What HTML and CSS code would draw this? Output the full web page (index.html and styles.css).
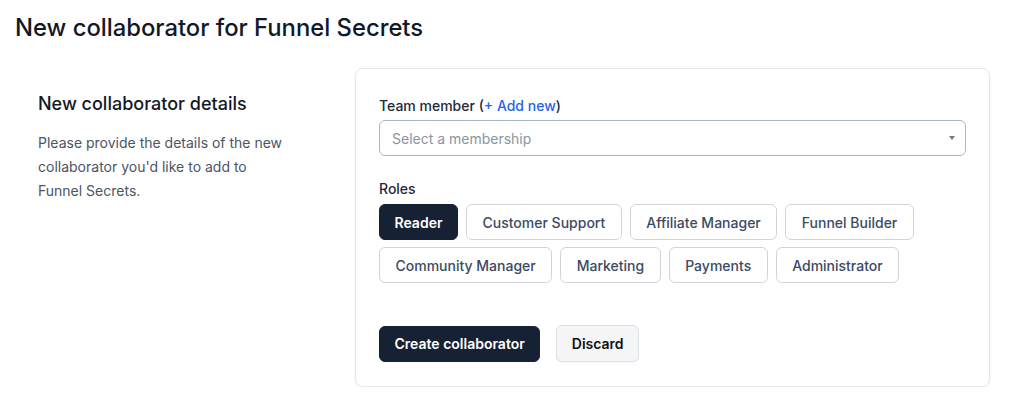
FILE: index.html
```html
<!DOCTYPE html>
<html lang="en">
<head>
<meta charset="utf-8">
<title>New collaborator for Funnel Secrets</title>
<link rel="stylesheet" href="styles.css">
</head>
<body>
  <h1 class="page-title">New collaborator for Funnel Secrets</h1>
  <div class="main">
    <div class="intro">
      <h2 class="intro-title">New collaborator details</h2>
      <p class="intro-text">Please provide the details of the new collaborator you'd like to add to Funnel Secrets.</p>
    </div>
    <div class="card">
      <label class="field-label">Team member (<a class="add-link" href="#">+ Add new</a>)</label>
      <div class="select">
        <span class="placeholder">Select a membership</span>
        <span class="caret"></span>
      </div>
      <div class="field-label roles-label">Roles</div>
      <div class="roles">
        <button class="role role-active">Reader</button>
        <button class="role">Customer Support</button>
        <button class="role">Affiliate Manager</button>
        <button class="role">Funnel Builder</button>
        <button class="role">Community Manager</button>
        <button class="role">Marketing</button>
        <button class="role">Payments</button>
        <button class="role">Administrator</button>
      </div>
      <div class="actions">
        <button class="btn btn-primary">Create collaborator</button>
        <button class="btn btn-secondary">Discard</button>
      </div>
    </div>
  </div>
</body>
</html>
```

FILE: styles.css
```css
* { box-sizing: border-box; }

body {
  margin: 0;
  font-family: Inter, "Noto Sans", "Liberation Sans", sans-serif;
  color: #111827;
  background: #ffffff;
}

.page-title {
  margin: 0;
  padding: 13px 0 0 15px;
  font-size: 23.8px;
  line-height: 30px;
  font-weight: 500;
  color: #111827;
}

.main {
  display: flex;
  margin-top: 25px;
  padding: 0 33px 0 38px;
}

.intro {
  width: 317px;
  flex-shrink: 0;
  padding-top: 24px;
}

.intro-title {
  margin: 0;
  font-size: 18px;
  line-height: 24px;
  font-weight: 500;
  color: #111827;
}

.intro-text {
  margin: 15px 0 0;
  max-width: 248px;
  font-size: 14px;
  line-height: 24px;
  color: #4b5563;
}

.card {
  flex: 1;
  border: 1px solid #e5e7eb;
  border-radius: 8px;
  box-shadow: 0 1px 3px rgba(0, 0, 0, 0.06);
  padding: 27px 23px 24px 23px;
}

.field-label {
  display: block;
  font-size: 14px;
  line-height: 20px;
  font-weight: 500;
  color: #1f2937;
}

.add-link {
  color: #2563eb;
  text-decoration: none;
}

.select {
  margin-top: 4px;
  height: 36px;
  border: 1px solid #aab6c4;
  border-radius: 6px;
  display: flex;
  align-items: center;
  justify-content: space-between;
  padding: 0 10px 0 12px;
}

.placeholder {
  font-size: 14px;
  color: #8b95a3;
}

.caret {
  width: 0;
  height: 0;
  border-left: 3.5px solid transparent;
  border-right: 3.5px solid transparent;
  border-top: 4px solid #7a7a7a;
}

.roles-label {
  margin-top: 23px;
}

.roles {
  margin-top: 5px;
  display: flex;
  flex-wrap: wrap;
  gap: 7px 8px;
}

.role {
  height: 36px;
  padding: 0 15.5px;
  border: 1px solid #d1d5db;
  border-radius: 6px;
  background: #ffffff;
  font-family: inherit;
  font-size: 14px;
  font-weight: 500;
  color: #3b4a63;
}

.role-active {
  padding: 0 14.5px;
  background: #172134;
  border-color: #172134;
  color: #ffffff;
  font-weight: 600;
}

.actions {
  margin-top: 42px;
  display: flex;
  align-items: center;
  gap: 16px;
}

.btn {
  height: 36px;
  padding: 0 14.5px;
  border-radius: 6px;
  font-family: inherit;
  font-size: 14px;
  font-weight: 600;
}

.btn-primary {
  background: #172134;
  border: 1px solid #172134;
  color: #ffffff;
}

.btn-secondary {
  height: 37px;
  background: #f4f5f6;
  border: 1px solid #dcdfe3;
  color: #111111;
  box-shadow: 0 1px 1px rgba(0, 0, 0, 0.03);
}
```
